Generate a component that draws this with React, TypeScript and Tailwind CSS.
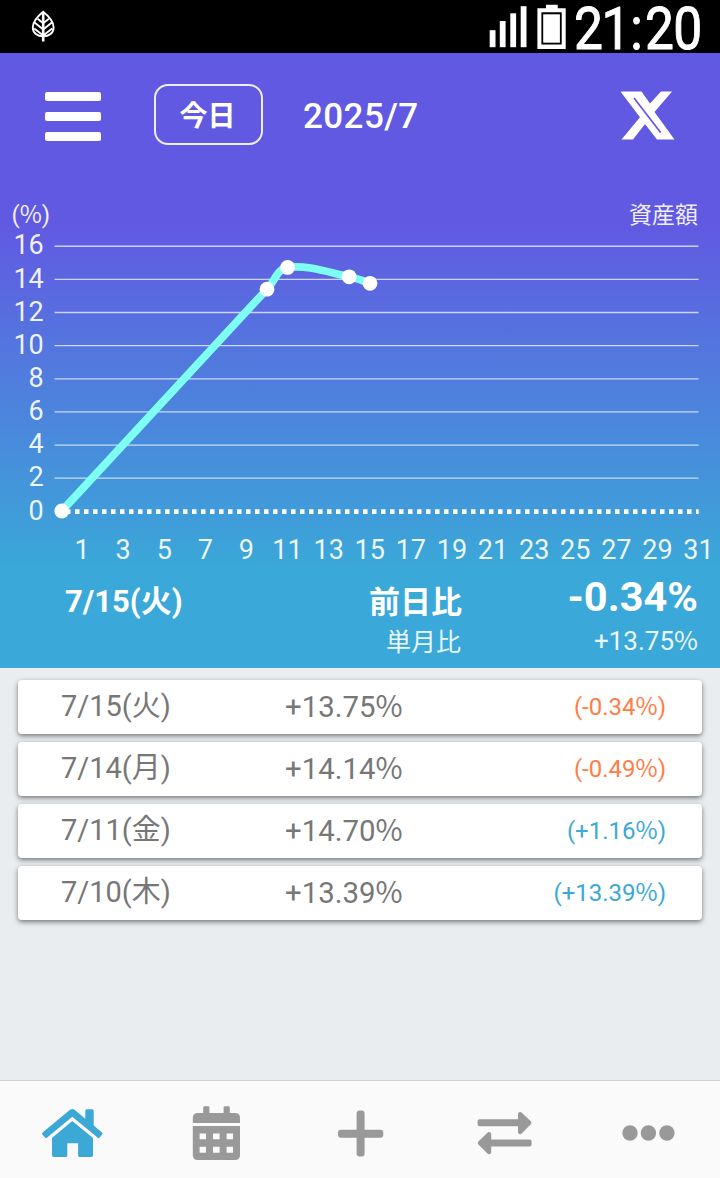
import type { ReactNode } from "react";

const BASE_Y = 511.3;
const STEP_Y = 33.13;
const yTicks = [16, 14, 12, 10, 8, 6, 4, 2, 0];
const xTicks = Array.from({ length: 16 }, (_, i) => i * 2 + 1);
const dots = [
  [61.8, 511],
  [267, 289.2],
  [287.6, 267.4],
  [349.2, 276.8],
  [370, 283.3],
];

const entries = [
  { date: "7/15(火)", total: "+13.75", diff: "-0.34", up: false },
  { date: "7/14(月)", total: "+14.14", diff: "-0.49", up: false },
  { date: "7/11(金)", total: "+14.70", diff: "+1.16", up: true },
  { date: "7/10(木)", total: "+13.39", diff: "+13.39", up: true },
];

function Percent() {
  return <span className="font-['Noto_Sans_CJK_JP',sans-serif] leading-[0]">%</span>;
}

function StatusBar() {
  return (
    <div className="flex h-[53px] shrink-0 items-start justify-between bg-black">
      <svg className="ml-[30px] mt-[9px] h-[34px] w-[26px]" viewBox="30 9 26 34" fill="none" stroke="#fff" strokeWidth="1.9">
        <path d="M43.2 11.7C38.5 15.5 32.8 20.5 32.8 27.2C32.8 33.2 37.5 36.4 43.2 36.4C49 36.4 53.6 33.2 53.6 27.2C53.6 20.5 48 15.5 43.2 11.7Z" />
        <path d="M43.2 12V41.5" strokeWidth="2.6" />
        <path d="M37.6 18.8L43.2 23.2L48.9 18.8M34.2 22.3L43.2 29.6L52.2 22.3M34.2 28.6L43.2 35.6L52.2 28.6" />
      </svg>
      <svg className="h-[53px] w-[235px]" viewBox="485 0 235 53">
        <g fill="#fff">
          <rect x="489.7" y="30.2" width="5.8" height="17" />
          <rect x="499.8" y="21" width="5.8" height="26.2" />
          <rect x="510.3" y="13.3" width="5.8" height="33.9" />
          <rect x="520.7" y="6.2" width="5.8" height="41" />
          <path fillRule="evenodd" d="M546 4.7H557.7V8.3H565.7V49H537.4V8.3H546ZM541.4 12.3V44.6H561.7V12.3Z" />
          <rect x="543.2" y="14.3" width="16.7" height="28.4" />
        </g>
        <text transform="translate(574 48.6) scale(0.86 1)" x="0 32 65.5 82.5 115.5" fill="#fff" stroke="#fff" strokeWidth="1" strokeLinejoin="round" className="text-[60px]">
          21:20
        </text>
      </svg>
    </div>
  );
}

function Header() {
  return (
    <header className="flex h-[137px] items-start pl-[45px] pr-[45px] pt-[31px]">
      <button className="mt-[7.5px] flex w-14 flex-col gap-[11px]" aria-label="menu">
        <span className="h-[9px] rounded-xs bg-white" />
        <span className="h-[9px] rounded-xs bg-white" />
        <span className="h-[9px] rounded-xs bg-white" />
      </button>
      <button className="ml-[53px] h-[61px] w-[109px] rounded-[14px] border-2 border-white/90 pt-[2px] pr-[2px] text-[28px] leading-[57px] font-bold">
        今日
      </button>
      <div className="ml-[40px] mt-[2px] text-[35px] leading-[61px] font-medium tracking-[0.4px]">2025/7</div>
      <svg className="ml-auto mt-[7px] h-[50px] w-[54px]" viewBox="621 91 54 50">
        <path fill="#fff" fillRule="evenodd" d="M620.5 91.5H641.5L650 103.5L661 91.5H672L654.5 112L674.5 139.5H657L645 124L633 139.5H621.5L640 117.3Z" />
        <path fill="none" stroke="#6259e2" strokeWidth="1.7" d="M634 98L660.6 132.4" />
      </svg>
    </header>
  );
}

function Chart() {
  return (
    <svg className="block h-[385px] w-full" viewBox="0 190 720 385">
      <g fill="#fff" fillOpacity="0.92">
        <text x="11.5" y="223" className="text-[24px]">
          (<tspan className="font-['Noto_Sans_CJK_JP',sans-serif]">%</tspan>)
        </text>
        <text x="698" y="222.5" textAnchor="end" className="text-[23px]">資産額</text>
        {yTicks.map((v) => (
          <text key={v} x="43.8" y={BASE_Y - (v / 2) * STEP_Y + 8.2} textAnchor="end" className="text-[27px]">
            {v}
          </text>
        ))}
        {xTicks.map((d) => (
          <text key={d} x={61.5 + d * 20.55} y="558.5" textAnchor="middle" className="text-[27px]">
            {d}
          </text>
        ))}
      </g>
      <g stroke="#fff" strokeOpacity="0.7" strokeWidth="1.3">
        {yTicks.slice(0, -1).map((v) => (
          <path key={v} d={`M54.5 ${BASE_Y - (v / 2) * STEP_Y}H698.5`} />
        ))}
      </g>
      <path d="M66 511.6H698.7" stroke="#fff" strokeWidth="4.6" strokeDasharray="4.5 4.5" />
      <path
        d="M61.8 511L267 289.2C276 280 276 270 287.6 267.4C307 264.5 329 272.5 349.2 276.8C357 278.3 363 281 370 283.3"
        fill="none"
        stroke="#7dfff4"
        strokeWidth="7.8"
      />
      {dots.map(([x, y]) => (
        <circle key={x} cx={x} cy={y} r="7.4" fill="#fff" />
      ))}
    </svg>
  );
}

function Summary() {
  return (
    <div className="flex h-[93px] items-start pl-[65px] pr-[22px]">
      <div className="mt-[9px] w-[200px] text-[31px] leading-[36px] font-bold">7/15(火)</div>
      <div className="flex w-[197px] flex-col items-end">
        <div className="mt-[10px] text-[31px] leading-[36px] font-bold">前日比</div>
        <div className="mt-[6px] pr-[1px] text-[25px] leading-[32px] text-white/90">単月比</div>
      </div>
      <div className="ml-auto flex flex-col items-end">
        <div className="mt-[2px] text-[41.5px] leading-[40px] font-bold">-0.34%</div>
        <div className="mt-[8px] text-[26px] leading-[32px] text-white/90">
          +13.75
          <Percent />
        </div>
      </div>
    </div>
  );
}

function EntryList() {
  return (
    <main className="flex grow flex-col gap-2 bg-[#eaedf0] px-[18px] pt-[12px] text-[#777]">
      {entries.map((e) => (
        <div
          key={e.date}
          className="flex h-[54px] items-center rounded-[4px] bg-white pl-[43px] pr-[36px] shadow-[0_2px_5px_rgba(0,0,0,0.5)]"
        >
          <div className="w-[224px] pb-[2px] text-[29px] leading-[52px]">{e.date}</div>
          <div className="text-[29.4px] leading-[54px]">
            {e.total}
            <Percent />
          </div>
          <div className={`ml-auto text-[24px] leading-[54px] ${e.up ? "text-[#3ca8d6]" : "text-[#ff7d46]"}`}>
            ({e.diff}
            <Percent />)
          </div>
        </div>
      ))}
    </main>
  );
}

function Tab({ label, viewBox, children }: { label: string; viewBox: string; children: ReactNode }) {
  return (
    <button aria-label={label} className="h-[97px] w-[144px]">
      <svg className="block h-full w-full" viewBox={viewBox} fill="#999">
        {children}
      </svg>
    </button>
  );
}

function TabBar() {
  return (
    <nav className="flex h-[98px] shrink-0 border-t border-[#cfd2d4] bg-[#fafafa]">
      <Tab label="home" viewBox="0 1081 144 97">
        <g fill="#3ca8d6">
          <path d="M70 1109.8Q72.3 1108.3 74.6 1109.8L85.3 1118.8V1110.7Q85.3 1109.2 86.8 1109.2H92.2Q93.7 1109.2 93.7 1110.7V1125.6L102 1132.5Q103 1133.4 102.3 1134.3L99.7 1137.6Q98.8 1138.6 97.8 1137.7L72.3 1116.8L46.9 1137.7Q45.9 1138.6 45 1137.6L42.3 1134.4Q41.6 1133.4 42.6 1132.5Z" />
          <path d="M72.3 1121L93 1138V1155.2Q93 1156.9 91.3 1156.9H79.6Q78.1 1156.9 78.1 1155.4V1143.3H67.3V1155.4Q67.3 1156.9 65.8 1156.9H53.6Q52 1156.9 52 1155.2V1138Z" />
        </g>
      </Tab>
      <Tab label="calendar" viewBox="144 1081 144 97">
        <path d="M203.2 1113V1107.6Q203.2 1106.2 204.6 1106.2H208Q209.4 1106.2 209.4 1107.6V1113H223.6V1107.6Q223.6 1106.2 225 1106.2H228.4Q229.8 1106.2 229.8 1107.6V1113H235Q240 1113 240 1118V1123H192.8V1118Q192.8 1113 197.8 1113Z" />
        <path fillRule="evenodd" d="M192.8 1126H240V1155Q240 1160 235 1160H197.8Q192.8 1160 192.8 1155ZM199.6 1133.4V1139.2H206V1133.4ZM213 1133.4V1139.2H219.6V1133.4ZM226.6 1133.4V1139.2H233V1133.4ZM199.6 1146.7V1152.8H206V1146.7ZM213 1146.7V1152.8H219.6V1146.7ZM226.6 1146.7V1152.8H233V1146.7Z" />
      </Tab>
      <Tab label="add" viewBox="288 1081 144 97">
        <rect x="338" y="1129.8" width="45.3" height="8" rx="3" />
        <rect x="356.6" y="1110.5" width="8" height="46" rx="3" />
      </Tab>
      <Tab label="swap" viewBox="432 1081 144 97">
        <path d="M479.6 1119.3H518V1113.7Q518.6 1111.4 521.2 1112.2L530.8 1121.3Q532 1122.8 530.8 1124.3L521.2 1133.9Q518.6 1134.8 518 1132.4V1126.3H479.6Q477.6 1126.3 477.6 1124.3V1121.3Q477.6 1119.3 479.6 1119.3Z" />
        <path d="M529.6 1139.4H491.2V1133.7Q490.6 1131.4 488 1132.2L478.4 1141.4Q477 1142.9 478.4 1144.4L488 1153.9Q490.6 1154.8 491.2 1152.4V1146.4H529.6Q531.6 1146.4 531.6 1144.4V1141.4Q531.6 1139.4 529.6 1139.4Z" />
      </Tab>
      <Tab label="more" viewBox="576 1081 144 97">
        <circle cx="630" cy="1133" r="7.7" />
        <circle cx="648.4" cy="1133" r="7.7" />
        <circle cx="666.9" cy="1133" r="7.7" />
      </Tab>
    </nav>
  );
}

export default function App() {
  return (
    <div className="flex h-[1178px] w-[720px] flex-col overflow-hidden bg-[#eaedf0] font-['Roboto','Noto_Sans_CJK_JP',sans-serif]">
      <StatusBar />
      <section className="h-[615px] shrink-0 bg-[linear-gradient(180deg,#6259e2_0px,#6259e2_170px,#3aa8d8_515px)] text-white">
        <Header />
        <Chart />
        <Summary />
      </section>
      <EntryList />
      <TabBar />
    </div>
  );
}
